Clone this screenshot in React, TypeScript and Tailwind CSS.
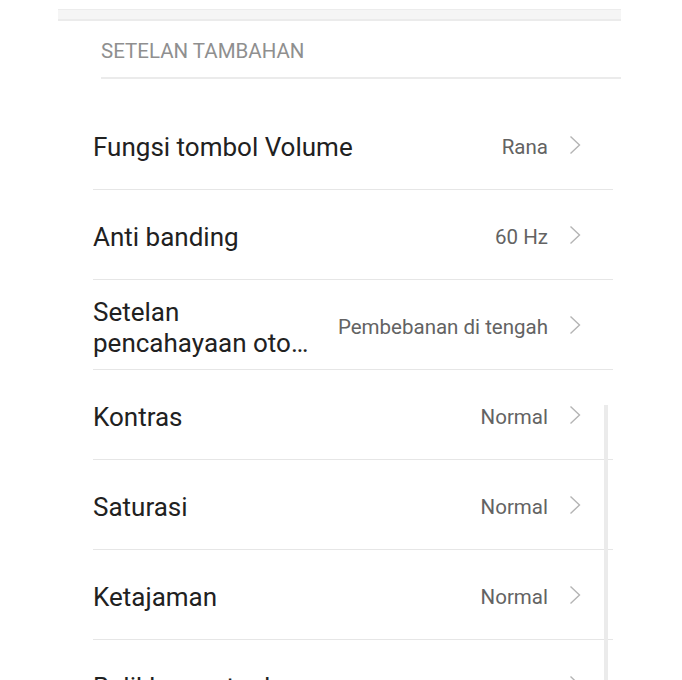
import { ReactNode } from 'react'

const rows: { title: string; second?: string; value: string }[] = [
  { title: 'Fungsi tombol Volume', value: 'Rana' },
  { title: 'Anti banding', value: '60 Hz' },
  { title: 'Setelan', second: 'pencahayaan otomatis', value: 'Pembebanan di tengah' },
  { title: 'Kontras', value: 'Normal' },
  { title: 'Saturasi', value: 'Normal' },
  { title: 'Ketajaman', value: 'Normal' },
  { title: 'Balikkan putar kamera', value: '' },
]

function Chevron() {
  return (
    <svg width="12" height="20" viewBox="0 0 12 20" className="shrink-0">
      <polyline points="1.5,1.5 10.5,10 1.5,18.5" fill="none" stroke="#b4b4b4" strokeWidth="1.4" />
    </svg>
  )
}

function Row({ title, second, value }: { title: string; second?: string; value: ReactNode }) {
  return (
    <div className="flex h-[90px] items-center gap-6 border-b border-[#e6e6e6] pt-[6px] pr-[32px]">
      <div className="min-w-0 flex-1 text-[26px] leading-[31px] text-[#212121]">
        <div className="truncate">{title}</div>
        {second && <div className="truncate">{second}</div>}
      </div>
      <span className="shrink-0 text-[20.5px] text-[#636363]">{value}</span>
      <span className="ml-[-3px] mt-[-6px]">
        <Chevron />
      </span>
    </div>
  )
}

export default function App() {
  return (
    <div
      className="relative h-[680px] w-[682px] overflow-hidden bg-white"
      style={{ fontFamily: 'Roboto, "Noto Sans", sans-serif' }}
    >
      <div className="pt-[9px]">
        <div className="ml-[58px] h-[12px] w-[563px] border-t border-b-2 border-t-[#ececec] border-b-[#ebebeb] bg-[#f5f5f5]" />
        <div className="ml-[101px] w-[520px] border-b-2 border-[#ebebeb]">
          <div className="flex h-[56px] items-center pt-[4px] text-[20.5px] text-[#8f8f8f]">SETELAN TAMBAHAN</div>
        </div>
        <div className="ml-[93px] mt-[21px] w-[520px]">
          {rows.map((r) => (
            <Row key={r.title} title={r.title} second={r.second} value={r.value} />
          ))}
        </div>
      </div>
      <div className="absolute left-[604px] top-[405px] h-[300px] w-[4px] bg-[#ebebeb]" />
    </div>
  )
}
